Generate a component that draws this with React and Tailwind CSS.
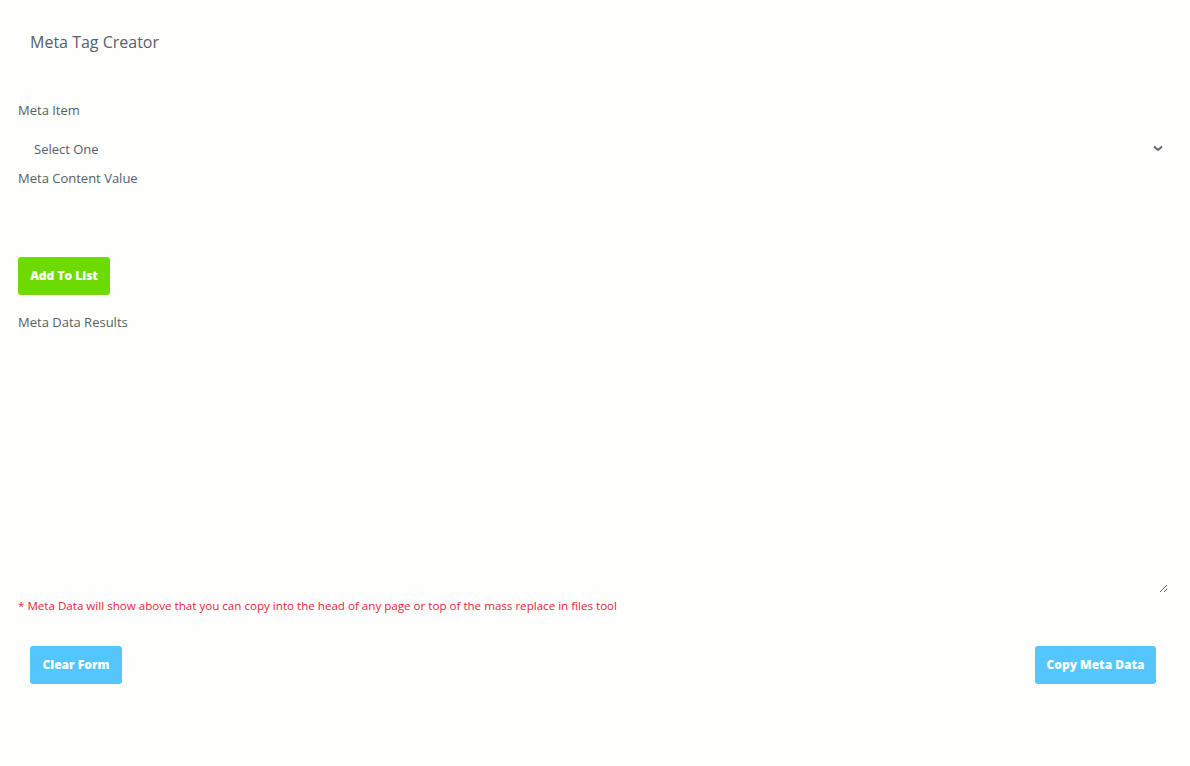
import React, { useState } from 'react';

const font = { fontFamily: '"Open Sans", "Liberation Sans", sans-serif' };

export default function App() {
  const [item, setItem] = useState('');
  const [value, setValue] = useState('');
  const [results, setResults] = useState('');

  return (
    <div className="min-h-[766px] bg-[#fefefd] text-[#555e68]" style={font}>
      <div className="px-[30px] pt-[31px] pb-[48px]">
        <h1 className="text-[16px] leading-[22px] text-[#56606b]">Meta Tag Creator</h1>
      </div>

      <div className="px-[18px]">
        <label className="block text-[13px] leading-[18px]">Meta Item</label>
        <div className="relative mt-[15px] h-[32px]">
          <select
            value={item}
            onChange={(e) => setItem(e.target.value)}
            className="w-full h-full appearance-none bg-transparent pl-[16px] text-[13px] text-[#555e68] outline-none"
          >
            <option value="">Select One</option>
            <option value="description">description</option>
            <option value="keywords">keywords</option>
            <option value="author">author</option>
          </select>
          <svg className="absolute right-[9px] top-[11px] pointer-events-none" width="10" height="7" viewBox="0 0 10 7">
            <path d="M1 1.5 L5 5 L9 1.5" fill="none" stroke="#5b6570" strokeWidth="1.8" />
          </svg>
        </div>

        <label className="block text-[13px] leading-[18px] mt-[3px]">Meta Content Value</label>
        <input
          value={value}
          onChange={(e) => setValue(e.target.value)}
          className="block w-full h-[67px] bg-transparent outline-none text-[13px]"
        />

        <button className="mt-[3px] h-[38px] w-[92px] rounded-[3px] bg-[#6edb00] text-white text-[12px] font-extrabold">
          Add To List
        </button>

        <label className="block mt-[18px] text-[13px] leading-[18px]">Meta Data Results</label>
        <textarea
          value={results}
          onChange={(e) => setResults(e.target.value)}
          className="block w-[1150px] h-[262px] bg-transparent outline-none text-[13px]"
        />

        <p className="mt-[5px] text-[11.6px] leading-[16px] text-[#e2263c]">
          * Meta Data will show above that you can copy into the head of any page or top of the mass replace in files tool
        </p>
      </div>

      <div className="flex justify-between pl-[30px] pr-[34px] mt-[32px]">
        <button className="h-[38px] w-[92px] rounded-[3px] bg-[#55c6fd] text-white text-[12px] font-extrabold">
          Clear Form
        </button>
        <button className="h-[38px] w-[121px] rounded-[3px] bg-[#55c6fd] text-white text-[12px] font-extrabold">
          Copy Meta Data
        </button>
      </div>
    </div>
  );
}
